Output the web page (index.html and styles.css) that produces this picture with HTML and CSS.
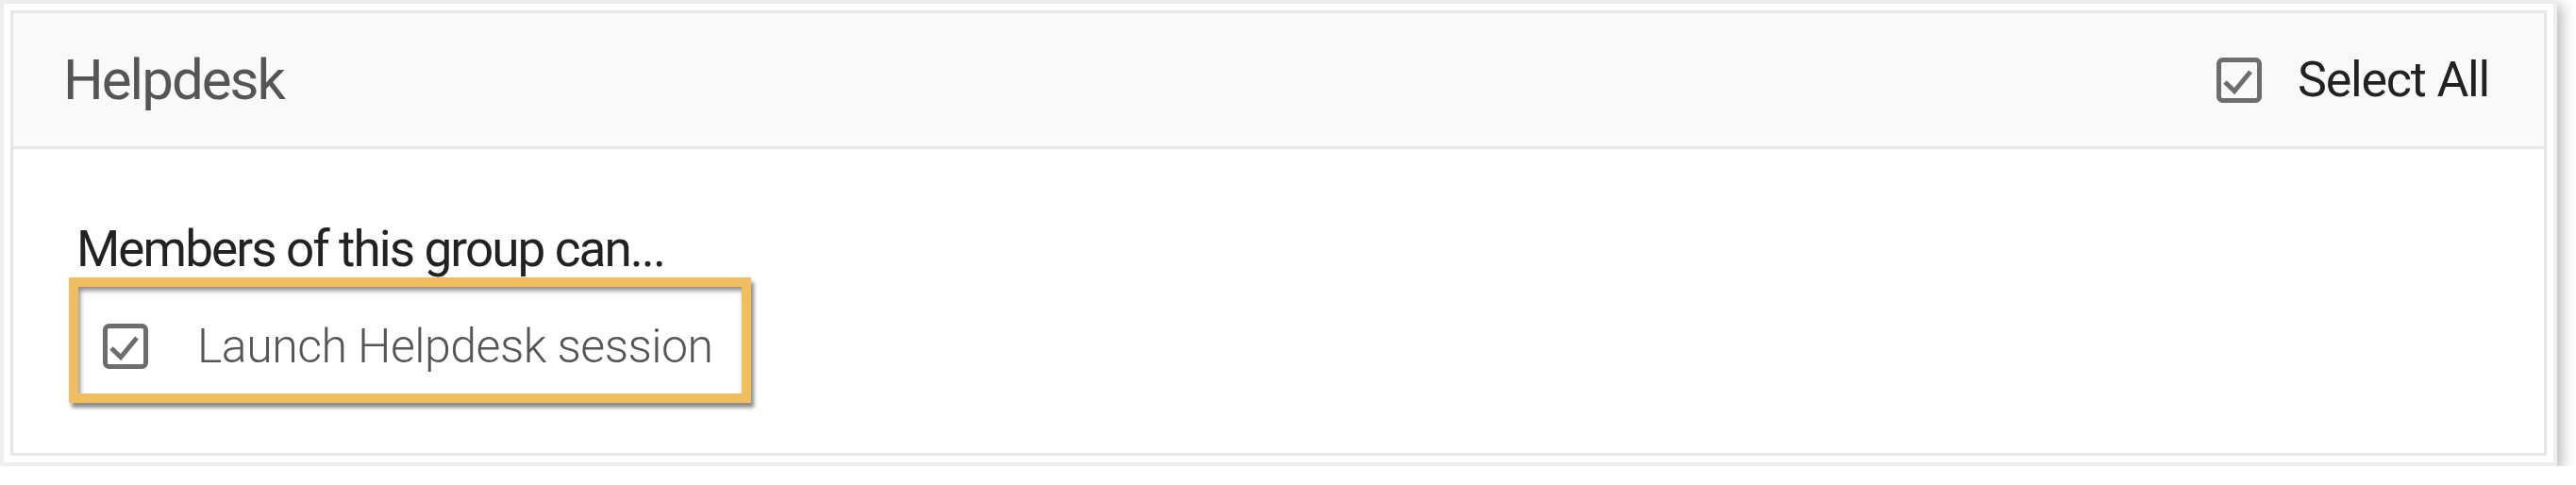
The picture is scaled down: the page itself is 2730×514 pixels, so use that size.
FILE: index.html
```html
<!DOCTYPE html>
<html>
<head>
<meta name="viewport" content="width=device-width, initial-scale=1">
<link rel="stylesheet" href="styles.css">
</head>
<body>

<div class="frame">
  <div class="group-card">
    <div class="group-head">
      <h2 class="group-title">Helpdesk</h2>
      <label class="select-all">
        <svg class="check" viewBox="0 0 48 48" width="48" height="48">
          <rect x="2.5" y="2.5" width="43" height="43" rx="4" />
          <polyline points="9,26 19,35.5 36,15" />
        </svg>
        <span>Select All</span>
      </label>
    </div>

    <div class="group-body">
      <p class="lead">Members of this group can...</p>
      <div class="perm">
        <svg class="check" viewBox="0 0 48 48" width="48" height="48">
          <rect x="2.5" y="2.5" width="43" height="43" rx="4" />
          <polyline points="9,26 19,35.5 36,15" />
        </svg>
        <span class="perm-name">Launch Helpdesk session</span>
      </div>
    </div>
  </div>
</div>

</body>
</html>
```

FILE: styles.css
```css
body {
  margin: 0;
  background-color: #fff;
  font-family: Roboto, "Liberation Sans", sans-serif;
}

.frame {
  width: 2710px;
  height: 494px;
  box-sizing: border-box;
  border: 4px solid #efefef;
  padding: 7px;
  background-color: #fff;
  box-shadow: 5px 5px 14px rgba(0, 0, 0, 0.28);
}

.group-card {
  height: 100%;
  box-sizing: border-box;
  border: 3px solid #e6e6e6;
}

.group-head {
  display: flex;
  align-items: center;
  justify-content: space-between;
  height: 141px;
  padding: 0 58px 0 53px;
  background-color: #f9f9f9;
  border-bottom: 3px solid #e6e6e6;
}

.group-title {
  margin: 0;
  font-size: 60px;
  font-weight: 400;
  letter-spacing: -2px;
  color: #555;
}

.select-all {
  display: flex;
  align-items: center;
  gap: 38px;
  font-size: 52px;
  letter-spacing: -1.2px;
  color: #222;
}

.check {
  display: block;
  flex: none;
}

.check rect {
  fill: none;
  stroke: #6d6d6d;
  stroke-width: 5;
}

.check polyline {
  fill: none;
  stroke: #6d6d6d;
  stroke-width: 5;
}

.group-body {
  padding: 76px 0 0 67px;
}

.lead {
  margin: 0;
  font-size: 53px;
  line-height: 60px;
  letter-spacing: -1.9px;
  color: #222;
}

.perm {
  display: inline-flex;
  align-items: center;
  gap: 52px;
  margin-left: -8px;
  padding: 33px 30px 20px 26px;
  border: 10px solid #f0be5f;
  background-color: #fff;
  box-shadow: 3px 5px 4px rgba(0, 0, 0, 0.45), inset 2px 4px 5px rgba(0, 0, 0, 0.45);
}

.perm-name {
  font-size: 50px;
  font-weight: 300;
  line-height: 60px;
  letter-spacing: -0.5px;
  color: #555;
}
```
